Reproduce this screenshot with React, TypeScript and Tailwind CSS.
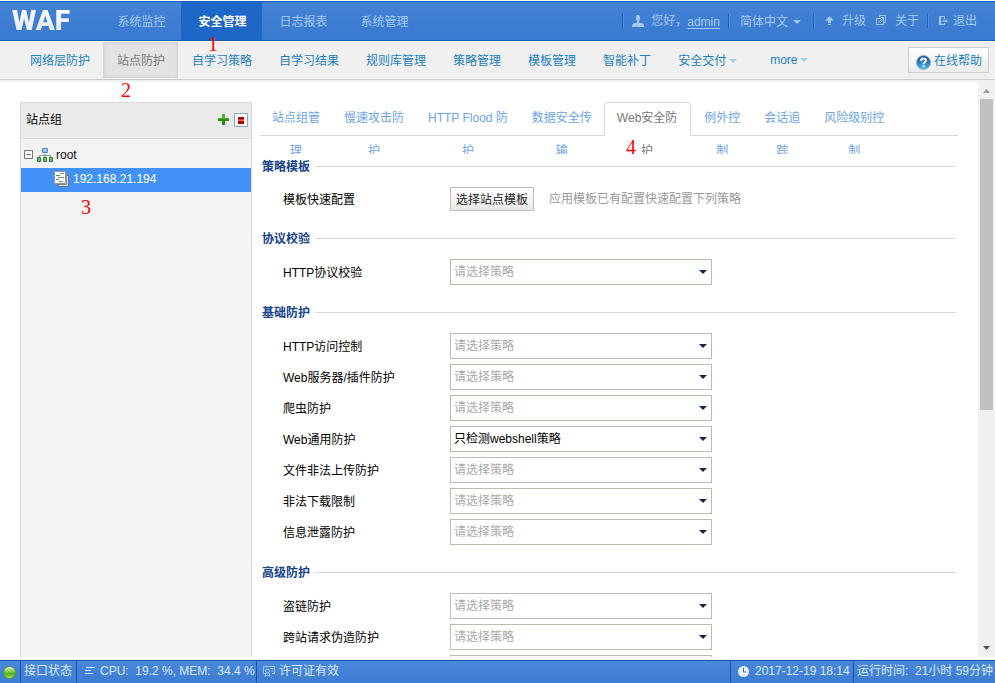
import type { ReactNode } from "react";

type Row = { label: string; value?: string };

const mainNav = ["系统监控", "安全管理", "日志报表", "系统管理"];
const subNav = [
  "网络层防护", "站点防护", "自学习策略", "自学习结果", "规则库管理",
  "策略管理", "模板管理", "智能补丁",
];
const tabs = [
  ["站点组管", "理"],
  ["慢速攻击防", "护"],
  ["HTTP Flood 防", "护"],
  ["数据安全传", "输"],
  ["Web安全防", "护"],
  ["例外控", "制"],
  ["会话追", "踪"],
  ["风险级别控", "制"],
];
const sections: { title: string; rows: Row[] }[] = [
  { title: "协议校验", rows: [{ label: "HTTP协议校验" }] },
  {
    title: "基础防护",
    rows: [
      { label: "HTTP访问控制" },
      { label: "Web服务器/插件防护" },
      { label: "爬虫防护" },
      { label: "Web通用防护", value: "只检测webshell策略" },
      { label: "文件非法上传防护" },
      { label: "非法下载限制" },
      { label: "信息泄露防护" },
    ],
  },
  {
    title: "高级防护",
    rows: [{ label: "盗链防护" }, { label: "跨站请求伪造防护" }, { label: "", value: "" }],
  },
];

export default function App() {
  return (
    <div className="relative flex h-screen flex-col overflow-hidden bg-white pt-px font-['Liberation_Sans','Noto_Sans_CJK_SC',sans-serif] text-xs text-black">
      <TopBar />
      <SubNav />
      <div className="mb-[3px] flex min-h-0 flex-1 overflow-hidden">
        <SiteTree />
        <main className="min-w-0 flex-1 overflow-hidden pt-5 pr-5 pl-2">
          <Tabs />
          <div className="mt-1 px-0.5">
            <Section title="策略模板">
              <div className="flex h-6 items-center">
                <span className="w-[188px] shrink-0 pt-0.5 pl-[21px]">模板快速配置</span>
                <button className="h-6 w-[84px] border border-[#bbb] bg-linear-to-b from-white to-[#e9e9e9] pt-0.5 whitespace-nowrap text-[#222]">
                  选择站点模板
                </button>
                <span className="ml-[15px] text-[#999]">应用模板已有配置快速配置下列策略</span>
              </div>
            </Section>
            {sections.map((s) => (
              <Section key={s.title} title={s.title}>
                {s.rows.map((row) => (
                  <PolicyRow key={row.label} row={row} />
                ))}
              </Section>
            ))}
          </div>
        </main>
        <ScrollBar />
      </div>
      <StatusBar />

      <Mark className="top-[33px] left-[208px]">1</Mark>
      <Mark className="top-[79px] left-[121px]">2</Mark>
      <Mark className="top-[196px] left-[81px]">3</Mark>
      <Mark className="top-[136px] left-[626px]">4</Mark>
    </div>
  );
}

function TopBar() {
  return (
    <header className="flex h-10 shrink-0 items-stretch justify-between border-y border-[#1d5dac] bg-linear-to-b from-[#4483d5] to-[#387ad0] text-[#a5c8f2]">
      <div className="flex">
        <h1 className="flex w-[100px] items-center pl-3">
          <span className="bg-linear-to-b from-white to-[#dfe6ee] bg-clip-text font-[Roboto] text-[28px] leading-8 font-black text-transparent">
            WAF
          </span>
        </h1>
        <nav className="flex">
          {mainNav.map((item) => (
            <a
              key={item}
              href="#"
              className={`flex w-[81px] items-center justify-center pt-px pl-0.5 ${
                item === "安全管理" ? "bg-[#1f67c6] font-bold text-white" : ""
              }`}
            >
              {item}
            </a>
          ))}
        </nav>
      </div>
      <div className="flex items-center pr-[18px] whitespace-nowrap">
        <Divider />
        <svg className="ml-2 shrink-0" width="12" height="12" viewBox="0 0 12 12" fill="currentColor">
          <path d="M4 2l1-2h2l1 2v2L7 6v2h3l2 2v2H0v-2l2-2h3V6L4 4z" />
        </svg>
        <span className="ml-[7px] w-9">您好，</span>
        <a href="#" className="pt-0.5 underline underline-offset-2">admin</a>
        <Divider className="ml-2" />
        <button className="ml-2.5 flex items-center gap-[5px] pt-0.5">
          简体中文
          <Caret />
        </button>
        <Divider className="ml-3" />
        <a href="#" className="ml-2.5 flex items-center gap-2">
          <svg width="9" height="10" viewBox="0 0 9 10" fill="currentColor">
            <path d="M4.5 0L9 4.500H6V7H3V4.500H0zM3 8h3v1H3z" />
          </svg>
          升级
        </a>
        <a href="#" className="ml-2.5 flex items-center gap-2">
          <svg className="mb-0.5" width="11" height="11" viewBox="0 0 11 11" fill="none" stroke="currentColor">
            <path d="M3.500 2.500V.5h6v7h-2M7.500 5v4.500h-7v-6H5M2.500 7.500l5-5M4.500 7.500l2-2M5 2.500h2.500V5" />
          </svg>
          关于
        </a>
        <Divider className="ml-2" />
        <a href="#" className="ml-[9px] flex items-center gap-[5px]">
          <svg width="10" height="10" viewBox="0 0 10 10" fill="none" stroke="currentColor">
            <path d="M6.500 3V.5h-5v8h5V7M4 5h5" />
            <path d="M2 .5v8" strokeWidth="2" />
            <path d="M7.500 3L10 5 7.500 7z" fill="currentColor" stroke="none" />
          </svg>
          退出
        </a>
      </div>
    </header>
  );
}

function SubNav() {
  return (
    <div className="mt-px flex h-10 shrink-0 items-start justify-between border-b-2 border-[#f0f0f0] bg-[#f0f0f0] text-[#1b7fc4] shadow-[inset_0_-1px_0_#ccc]">
      <nav className="flex h-9 pl-4">
        {subNav.map((item) => (
          <a
            key={item}
            href="#"
            className={`flex items-center pt-0.5 pr-[13px] pl-3.5 ${
              item === "站点防护"
                ? "bg-[#e3e3e3] text-[#777] shadow-[inset_0_0_4px_#c4c4c4]"
                : ""
            }`}
          >
            {item}
          </a>
        ))}
        <button className="flex items-center gap-[3px] pt-0.5 pr-[19px] pl-3.5">
          安全交付
          <Caret className="text-[#a6d2ec]" />
        </button>
        <button className="flex items-center gap-[3px] pl-3.5">
          more
          <Caret className="text-[#a6d2ec]" />
        </button>
      </nav>
      <button className="mt-[5px] mr-1.5 flex h-[26px] items-center gap-[3px] border border-[#ccc] bg-linear-to-b from-white to-[#ececec] pt-0.5 pr-1.5 pl-[7px]">
        <svg className="mt-0.5" width="15" height="15" viewBox="0 0 15 15">
          <defs>
            <radialGradient id="help" cx="0.5" cy="0.95" r="0.8">
              <stop offset="0" stopColor="#5cc4f8" />
              <stop offset="1" stopColor="#1c5a98" />
            </radialGradient>
          </defs>
          <circle cx="7.500" cy="7.500" r="7" fill="url(#help)" stroke="#8fb4d4" />
          <path d="M5 6c0-3.500 5-3 5-.5C10 7 7.700 7 7.700 9M7.700 10.300v1.700" fill="none" stroke="#fff" strokeWidth="1.800" />
        </svg>
        在线帮助
      </button>
    </div>
  );
}

function SiteTree() {
  return (
    <aside className="mt-5 ml-5 w-[232px] shrink-0 border border-b-0 border-[#d9d9d9] bg-[#f3f3f3]">
      <div className="flex h-9 items-center border-b border-[#dcdcdc] bg-[#ebebeb] pr-[3px] pb-0.5 pl-[5px]">
        <h2 className="flex-1">站点组</h2>
        <button aria-label="添加" className="mr-[5px]">
          <svg width="11" height="11" viewBox="0 0 11 11">
            <path d="M4 0h3v4h4v3H7v4H4V7H0V4h4z" fill="#2b8a12" />
            <path d="M4 0h3v4h4v1H0V4h4z" fill="#4fb822" />
          </svg>
        </button>
        <button aria-label="删除">
          <svg width="14" height="14" viewBox="0 0 14 14">
            <path d="M.5.5h13v13H.5z" fill="#fff" stroke="#8ea5b8" />
            <path d="M4 4h6v7H4z" fill="#b00000" />
            <path d="M4 6.500h6v1.500H4z" fill="#ff6a5a" />
          </svg>
        </button>
      </div>
      <ul className="pt-1">
        <li className="flex h-[25px] items-center pb-0.5 pl-[3px] text-[#112]">
          <svg width="9" height="9" viewBox="0 0 9 9" fill="#fff" stroke="#777">
            <path d="M.5.5h8v8h-8zM2 4.500h5" />
          </svg>
          <svg className="ml-1" width="16" height="14" viewBox="0 0 16 14">
            <path d="M8 5v3M2.500 10V7.500h11V10M8 7v3" fill="none" stroke="#8798ac" />
            <path d="M5.500.5h5v4h-5z" fill="#9cc4f5" stroke="#5884c4" />
            <path d="M.5 9.500h3v4h-3zM6.500 9.500h3v4h-3zM12.500 9.500h3v4h-3z" fill="#6fbf72" stroke="#39743c" />
          </svg>
          <span className="ml-[3px]">root</span>
        </li>
        <li className="flex h-6 items-center bg-[#4191f7] pb-0.5 pl-[33px] text-white">
          <svg width="15" height="16" viewBox="0 0 15 16">
            <path d="M4.500 4.500h10v11h-10z" fill="#dfe5ec" stroke="#66737f" />
            <path d="M2.500 2.500h10v11h-10z" fill="#eef1f5" stroke="#7b8894" />
            <path d="M.5.5h11v12H.5z" fill="#fff" stroke="#8c9aa8" />
            <path d="M2 4.500h4M2 8.500h3" stroke="#3fa63f" />
            <path d="M6 2.500h4M4 6.500h6M5 10.500h4" stroke="#7a8ca0" />
          </svg>
          <span className="ml-1">192.168.21.194</span>
        </li>
      </ul>
    </aside>
  );
}

// the second line of a label is cut by the strip's lower edge
function Tabs() {
  return (
    <div className="relative isolate flex h-[52px] overflow-hidden">
      <div className="absolute inset-x-0 top-[33px] -z-20 h-px bg-[#d9d9d9]" />
      {tabs.map(([first, second]) => {
        const active = first.startsWith("Web");
        return (
          <button
            key={first}
            className={`h-[66px] shrink-0 text-center leading-[33px] whitespace-nowrap ${
              active
                ? "relative mr-px pr-3.5 pl-[13px] text-[#777] before:absolute before:inset-x-0 before:top-0 before:-z-10 before:h-[34px] before:rounded-t before:border before:border-b-0 before:border-[#d9d9d9] before:bg-white"
                : "px-3 text-[#6da3e8]"
            }`}
          >
            {first}
            <br />
            {second}
          </button>
        );
      })}
    </div>
  );
}

function Section({ title, children }: { title: string; children: ReactNode }) {
  return (
    <section className="mb-[19px]">
      <div className="mb-[13px] flex h-4 items-center gap-[5px]">
        <h2 className="pt-0.5 font-bold text-[#15428b]">{title}</h2>
        <div className="h-px flex-1 bg-[#d9d9d9]" />
      </div>
      <div className="flex flex-col gap-[5px]">{children}</div>
    </section>
  );
}

function PolicyRow({ row }: { row: Row }) {
  return (
    <label className="flex h-[26px] items-center">
      <span className="w-[188px] shrink-0 pt-0.5 pl-[21px]">{row.label}</span>
      <span className="relative w-[262px]">
        <select
          className={`block h-[26px] w-full appearance-none border border-[#bdbdad] bg-white pr-6 pl-[3px] outline-none ${
            row.value ? "text-black" : "text-[#aaa]"
          }`}
        >
          <option>{row.value ?? "请选择策略"}</option>
        </select>
        <Caret className="pointer-events-none absolute top-[11px] right-[5px] text-[#15264d]" />
      </span>
    </label>
  );
}

function ScrollBar() {
  return (
    <div className="flex w-[17px] shrink-0 flex-col items-center bg-[#f0f0f0]">
      <svg className="shrink-0" width="17" height="17" viewBox="0 0 17 17" fill="#999">
        <path d="M5 11l3.500-4 3.500 4z" />
      </svg>
      <div className="h-[54%] w-[13px] bg-[#c1c1c1]" />
      <svg className="mt-auto shrink-0" width="17" height="17" viewBox="0 0 17 17" fill="#505050">
        <path d="M5 6h7l-3.500 4z" />
      </svg>
    </div>
  );
}

function StatusBar() {
  return (
    <footer className="flex h-[23px] shrink-0 items-stretch border-t border-[#1654b4] bg-linear-to-b from-[#4a88d9] to-[#3c7cd2] whitespace-nowrap text-[#d9e9fb]">
      <div className="flex w-5 items-center pl-[3px]">
        <svg width="13" height="13" viewBox="0 0 13 13">
          <defs>
            <linearGradient id="led" x1="0" y1="0" x2="0" y2="1">
              <stop offset="0" stopColor="#e6f8d0" />
              <stop offset="0.45" stopColor="#7ccb45" />
              <stop offset="0.6" stopColor="#4fae1c" />
              <stop offset="1" stopColor="#b4ee55" />
            </linearGradient>
          </defs>
          <circle cx="6.500" cy="6.500" r="6" fill="url(#led)" stroke="#4c9a4a" />
        </svg>
      </div>
      <div className="flex w-14 items-center border-l border-[#1654b4] pb-0.5 pl-[3px]">接口状态</div>
      <div className="flex w-[180px] items-center gap-1 border-l border-[#1654b4] pb-0.5 pl-2">
        <svg width="11" height="8" viewBox="0 0 11 8" stroke="currentColor">
          <path d="M1 .5h9M0 3.500h6M0 6.500h8" />
        </svg>
        <span>CPU:&nbsp; 19.2 %, MEM:&nbsp; 34.4 %</span>
      </div>
      <div className="flex flex-1 items-center gap-1 border-l border-[#1654b4] pb-0.5 pl-1.5">
        <svg width="12" height="11" viewBox="0 0 12 11" fill="none" stroke="#a5c8f2">
          <path d="M2 7.500H.5v-7h11v7H9M7.500 2.500H10M8.500 5H10" />
          <circle cx="4.500" cy="5" r="2" />
          <path d="M3 7l-1 3.500 2.500-1.500L7 10.500 6 7" />
        </svg>
        许可证有效
      </div>
      <div className="flex w-[123px] items-center gap-1.5 border-l border-[#1654b4] pb-0.5 pl-[7px]">
        <svg width="11" height="11" viewBox="0 0 11 11">
          <circle cx="5.500" cy="5.500" r="5.500" fill="#eaf3fd" />
          <path d="M5.500 2v4H8" fill="none" stroke="#2f6fc4" />
        </svg>
        2017-12-19 18:14
      </div>
      <div className="flex items-center border-l border-[#1654b4] pr-0.5 pb-0.5 pl-[3px]">
        运行时间:&nbsp; 21小时 59分钟
      </div>
    </footer>
  );
}

function Caret({ className = "" }: { className?: string }) {
  return (
    <svg className={className} width="8" height="4" viewBox="0 0 8 4" fill="currentColor">
      <path d="M0 0h8L4 4z" />
    </svg>
  );
}

function Divider({ className = "" }: { className?: string }) {
  return <span className={`h-3.5 w-0.5 border-r border-l border-r-[#4f8edc] border-l-[#2260b3] ${className}`} />;
}

function Mark({ className, children }: { className: string; children: ReactNode }) {
  return (
    <span className={`absolute font-['Liberation_Serif',serif] text-xl leading-[22px] text-[#f00] ${className}`}>
      {children}
    </span>
  );
}
